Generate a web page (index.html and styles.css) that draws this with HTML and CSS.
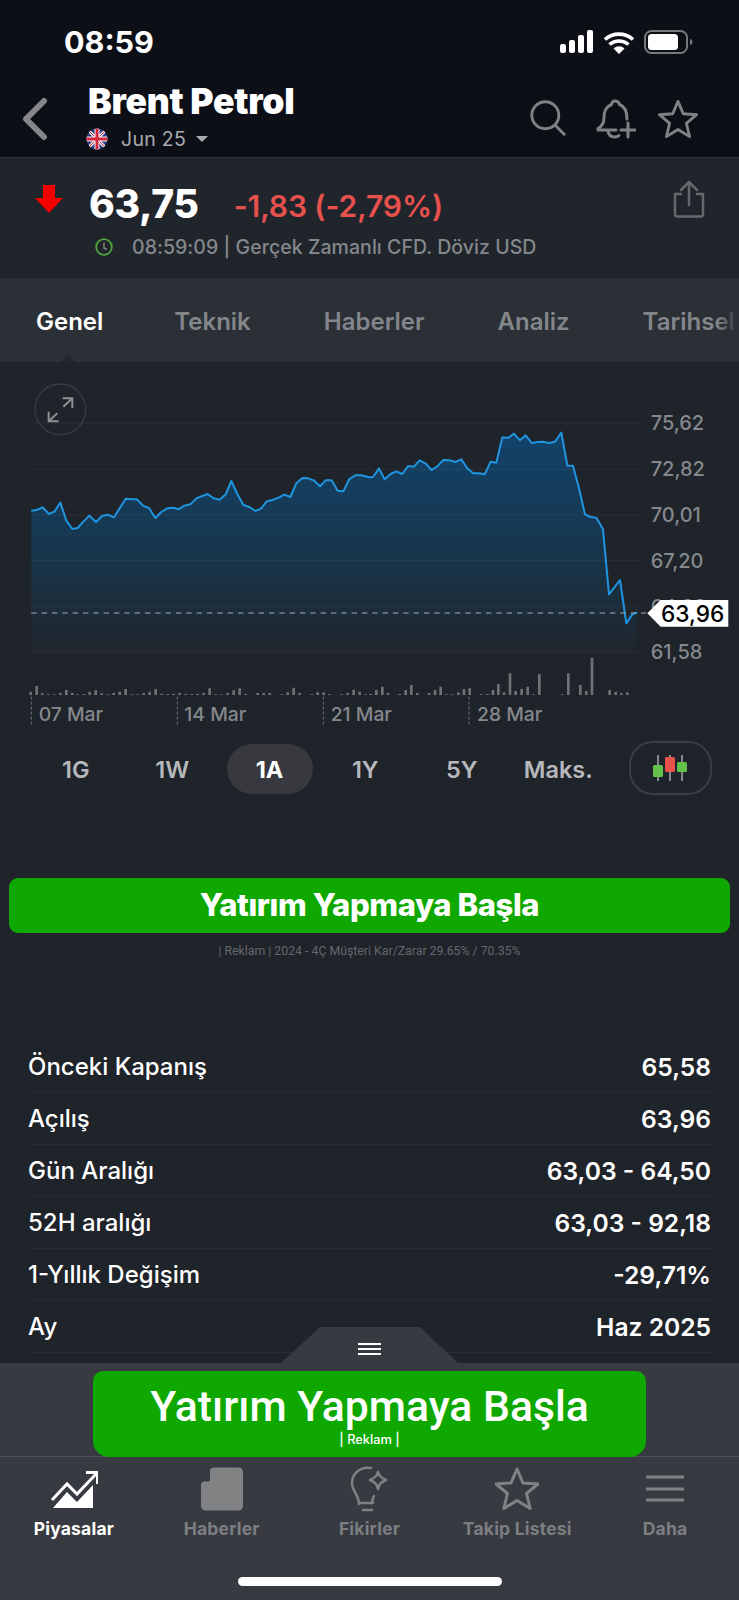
FILE: index.html
```html
<!DOCTYPE html>
<html>
  <head>
    <title>Brent Petrol</title>
    <link rel="stylesheet" href="styles.css">
  </head>
  <body>
    <div class="page">
      <header class="head">
        <div class="status">
          <span class="clock-time">08:59</span>
          <svg class="status-icons" width="134" height="26" viewBox="0 0 134 26">
            <rect x="1" y="15" width="6" height="9" rx="2" fill="#fff"/>
            <rect x="10" y="11" width="6" height="13" rx="2" fill="#fff"/>
            <rect x="19" y="6" width="6" height="18" rx="2" fill="#fff"/>
            <rect x="28" y="1" width="6" height="23" rx="2" fill="#fff"/>
            <path d="M46 10.5a21 21 0 0 1 28 0M50.500 15.500a14.500 14.500 0 0 1 19 0" fill="none" stroke="#fff" stroke-width="3.600"/>
            <path d="M54.500 19.500a8 8 0 0 1 11 0L60 25z" fill="#fff"/>
            <rect x="86" y="2" width="42" height="22" rx="6.500" fill="none" stroke="#77797d" stroke-width="2"/>
            <rect x="89" y="5" width="30" height="16" rx="3.500" fill="#fff"/>
            <path d="M131 10v6c1.500-.5 2.500-1.500 2.500-3s-1-2.500-2.500-3z" fill="#77797d"/>
          </svg>
        </div>
        <div class="topbar">
          <svg class="back" width="26" height="44" viewBox="0 0 26 44">
            <path d="M22 4 4 22l18 18" fill="none" stroke="#85878b" stroke-width="6" stroke-linecap="round" stroke-linejoin="round"/>
          </svg>
          <div class="title-block">
            <div class="title">Brent Petrol</div>
            <div class="subtitle">
              <svg width="22" height="22" viewBox="0 0 22 22">
                <clipPath id="flagclip"><circle cx="11" cy="11" r="10.500"/></clipPath>
                <g clip-path="url(#flagclip)">
                  <rect width="22" height="22" fill="#2e3f85"/>
                  <path d="M0 0l22 22M22 0 0 22" stroke="#f3f3f3" stroke-width="3"/>
                  <path d="M0 0l22 22M22 0 0 22" stroke="#d4273d" stroke-width="1"/>
                  <path d="M11 0v22M0 11h22" stroke="#f3f3f3" stroke-width="5"/>
                  <path d="M11 0v22M0 11h22" stroke="#d4273d" stroke-width="3"/>
                </g>
              </svg>
              <span>Jun 25</span>
              <i class="caret"></i>
            </div>
          </div>
          <div class="top-icons">
            <svg class="icon-search" width="36" height="36" viewBox="0 0 40 40" fill="none" stroke="#808285" stroke-width="3.200" stroke-linecap="round">
              <circle cx="17" cy="17" r="15"/>
              <path d="m28 28 10 10"/>
            </svg>
            <svg class="icon-bell" width="40" height="42" viewBox="0 0 40 42" fill="none" stroke="#808285" stroke-width="3" stroke-linecap="round" stroke-linejoin="round">
              <path d="M19 3c-2 0-3.500 1.500-3.500 3.500C9 9 8 14 8 20c0 5-1.500 8-6 10.500l0 1.500h18M31 21c0-6-1-12-7.500-14.500C23.500 4.500 21 3 19 3"/>
              <path d="M12 33c.5 4 3.500 6 7 6 2 0 3-.5 4-1.500"/>
              <path d="M32 25v14M25 32h14"/>
            </svg>
            <svg width="40" height="40" viewBox="0 0 42 42" fill="none" stroke="#808285" stroke-width="3" stroke-linejoin="round">
              <path d="m21 2.500 5.500 13 14 1-10.700 9 3.400 14L21 32l-12.200 7.500 3.400-14-10.700-9 14-1z"/>
            </svg>
          </div>
        </div>
      </header>

      <section class="quote">
        <div class="quote-main">
          <svg class="down-arrow" width="28" height="28" viewBox="0 0 28 28"><path d="M8 0h12v13h8L14 28 0 13h8z" fill="#f40000"/></svg>
          <span class="price">63,75</span>
          <span class="change">-1,83 (-2,79%)</span>
          <svg class="share" width="32" height="38" viewBox="0 0 32 38" fill="none" stroke="#65686d" stroke-width="2.500" stroke-linecap="round" stroke-linejoin="round">
            <path d="M16 25V2M8 10l8-8 8 8"/>
            <path d="M8 14H2v20c0 1.500 1 2.500 2.500 2.500h23c1.500 0 2.500-1 2.500-2.500V14h-6"/>
          </svg>
        </div>
        <div class="quote-meta">
          <svg width="18" height="18" viewBox="0 0 18 18" fill="none" stroke="#4fa83d" stroke-width="1.800">
            <circle cx="9" cy="9" r="7.800"/>
            <path d="M9 4.500V10l3 1.500" stroke="#85888c" stroke-width="1.400"/>
          </svg>
          <span>08:59:09 | Gerçek Zamanlı CFD. Döviz USD</span>
        </div>
      </section>

      <nav class="tabs">
        <span class="tab tab-on">Genel</span>
        <span class="tab">Teknik</span>
        <span class="tab">Haberler</span>
        <span class="tab">Analiz</span>
        <span class="tab">Tarihsel</span>
      </nav>

      <!-- chart is drawn in 3x units, y=0 is page y 370 -->
      <svg class="chart" width="739" height="363" viewBox="0 -24 2217 1089">
        <defs>
          <linearGradient id="areafill" x1="0" y1="188" x2="0" y2="850" gradientUnits="userSpaceOnUse">
            <stop offset="0" stop-color="#12436a"/>
            <stop offset="0.5" stop-color="#17374f"/>
            <stop offset="1" stop-color="#1f252c"/>
          </linearGradient>
        </defs>
        <polygon fill="url(#areafill)" points="94,845 94,422 110,420 128,412 147,432 163,425 181,398 199,452 217,477 233,474 250,455 268,437 288,456 306,438 323,434 342,442 360,413 377,386 395,388 411,388 429,407 447,414 466,444 484,426 502,415 519,413 536,418 553,407 571,403 589,385 607,378 623,372 641,385 659,389 677,373 694,333 712,372 730,405 748,411 766,423 783,416 800,394 818,390 836,383 853,374 871,381 889,340 907,324 925,325 941,331 960,349 977,331 995,331 1013,362 1030,364 1048,327 1066,316 1084,316 1107,322 1119,321 1137,295 1154,328 1172,312 1189,304 1207,312 1224,288 1242,290 1259,271 1277,281 1295,300 1312,289 1330,270 1348,271 1366,276 1384,268 1402,295 1419,310 1437,310 1454,313 1472,275 1489,278 1507,202 1524,204 1542,191 1560,211 1577,196 1595,219 1613,216 1630,215 1648,219 1665,215 1684,188 1702,287 1719,287 1737,355 1755,433 1772,441 1789,443 1809,478 1827,673 1860,630 1879,760 1897,733 1912,727 1912,845"/>
        <path d="M94 159H1930M94 298H1930M94 435H1930M94 572H1930M94 710H1930M94 845H1930" stroke="#fff" stroke-opacity="0.05" stroke-width="3"/>
        <polyline fill="none" stroke="#1f95e0" stroke-width="6" stroke-linejoin="round" points="94,422 110,420 128,412 147,432 163,425 181,398 199,452 217,477 233,474 250,455 268,437 288,456 306,438 323,434 342,442 360,413 377,386 395,388 411,388 429,407 447,414 466,444 484,426 502,415 519,413 536,418 553,407 571,403 589,385 607,378 623,372 641,385 659,389 677,373 694,333 712,372 730,405 748,411 766,423 783,416 800,394 818,390 836,383 853,374 871,381 889,340 907,324 925,325 941,331 960,349 977,331 995,331 1013,362 1030,364 1048,327 1066,316 1084,316 1107,322 1119,321 1137,295 1154,328 1172,312 1189,304 1207,312 1224,288 1242,290 1259,271 1277,281 1295,300 1312,289 1330,270 1348,271 1366,276 1384,268 1402,295 1419,310 1437,310 1454,313 1472,275 1489,278 1507,202 1524,204 1542,191 1560,211 1577,196 1595,219 1613,216 1630,215 1648,219 1665,215 1684,188 1702,287 1719,287 1737,355 1755,433 1772,441 1789,443 1809,478 1827,673 1860,630 1879,760 1897,733 1912,727"/>
        <path d="M94 729H1940" stroke="#a9acb0" stroke-width="3" stroke-dasharray="16 15"/>

        <path stroke="#6e7175" stroke-width="8" d="M92 975v-10M110 975v-27M127 975v-5M145 975v-2M163 975v-2M181 975v-6M199 975v-15M217 975v-6M233 975v-2M251 975v-3M269 975v-10M287 975v-14M305 975v-5M323 975v-2M341 975v-6M359 975v-10M377 975v-18M395 975v-2M413 975v-2M431 975v-6M449 975v-10M467 975v-18M485 975v-4M503 975v-2M521 975v-3M539 975v-6M557 975v-3M575 975v-2M593 975v-3M611 975v-6M629 975v-20M647 975v-2M665 975v-2M683 975v-6M701 975v-14M719 975v-20M737 975v-3M773 975v-6M791 975v-6M809 975v-6M845 975v-2M863 975v-8M881 975v-22M899 975v-6M935 975v-2M953 975v-8M971 975v-8M989 975v-3M1025 975v-2M1043 975v-6M1061 975v-16M1079 975v-10M1097 975v-2M1112 975v-3M1129 975v-15M1147 975v-25M1164 975v-6M1199 975v-3M1217 975v-15M1234 975v-30M1252 975v-6M1287 975v-6M1305 975v-15M1322 975v-25M1339 975v-2M1357 975v-2M1375 975v-8M1392 975v-18M1409 975v-20M1444 975v-2M1462 975v-3M1479 975v-15M1495 975v-33M1512 975v-8M1530 975v-65M1547 975v-12M1565 975v-18M1583 975v-25M1600 975v-2M1618 975v-62M1687 975v-2M1705 975v-65M1741 975v-30M1759 975v-12M1776 975v-112M1829 975v-15M1847 975v-10M1864 975v-5M1882 975v-8"/>
        <path d="M94 980V1065M532 980V1065M970 980V1065M1407 980V1065" stroke="#6e7175" stroke-width="3" stroke-dasharray="9 6"/>

        <text class="axis" x="1952" y="160">75,62</text>
        <text class="axis" x="1952" y="298">72,82</text>
        <text class="axis" x="1952" y="435">70,01</text>
        <text class="axis" x="1952" y="572">67,20</text>
        <text class="axis" x="1952" y="710">64,39</text>
        <text class="axis" x="1952" y="845">61,58</text>
        <text class="date" x="116" y="1032">07 Mar</text>
        <text class="date" x="553" y="1032">14 Mar</text>
        <text class="date" x="992" y="1032">21 Mar</text>
        <text class="date" x="1431" y="1032">28 Mar</text>

        <polygon points="1942,730 1982,690 2185,690 2185,770 1982,770" fill="#fff"/>
        <text class="tag" x="1983" y="731">63,96</text>

        <circle cx="181" cy="118" r="76" fill="none" stroke="#383c42" stroke-width="4"/>
        <path d="M146 154 172 130M190 110 217 85M146 125v29h30M188 85h29v29" fill="none" stroke="#8e9094" stroke-width="6"/>
      </svg>

      <div class="ranges">
        <span class="range">1G</span>
        <span class="range">1W</span>
        <span class="range range-on">1A</span>
        <span class="range">1Y</span>
        <span class="range">5Y</span>
        <span class="range">Maks.</span>
        <span class="candles">
          <svg width="36" height="26" viewBox="0 0 36 26">
            <path d="M6 0v26M18 0v26M30 0v26" stroke="#85888c" stroke-width="2"/>
            <rect x="1" y="10" width="10" height="12" rx="1.500" fill="#64c24c"/>
            <rect x="13" y="2" width="10" height="15" rx="1.500" fill="#e8524a"/>
            <rect x="25" y="7" width="10" height="10" rx="1.500" fill="#64c24c"/>
          </svg>
        </span>
      </div>

      <div class="cta">Yatırım Yapmaya Başla</div>
      <p class="disclaimer">| Reklam | 2024 - 4Ç Müşteri Kar/Zarar 29.65% / 70.35%</p>

      <div class="stats">
        <div class="stat"><span>Önceki Kapanış</span><b>65,58</b></div>
        <div class="stat"><span>Açılış</span><b>63,96</b></div>
        <div class="stat"><span>Gün Aralığı</span><b>63,03 - 64,50</b></div>
        <div class="stat"><span>52H aralığı</span><b>63,03 - 92,18</b></div>
        <div class="stat"><span>1-Yıllık Değişim</span><b>-29,71%</b></div>
        <div class="stat"><span>Ay</span><b>Haz 2025</b></div>
      </div>

      <footer class="dock">
        <div class="handle"><i></i><i></i><i></i></div>
        <div class="banner">
          <div class="banner-text">Yatırım Yapmaya Başla</div>
          <div class="banner-small">| Reklam |</div>
        </div>
        <div class="nav">
          <div class="nav-item nav-on">
            <svg width="48" height="44" viewBox="0 0 48 44">
              <path d="M2 33 17 17l10 10L46 7" fill="none" stroke="#fff" stroke-width="3"/>
              <path d="M36 5.500h11.500V17" fill="none" stroke="#fff" stroke-width="3"/>
              <path d="M3 41 17 25l10 10 16-17v23z" fill="#fff"/>
            </svg>
            <span>Piyasalar</span>
          </div>
          <div class="nav-item">
            <svg width="44" height="44" viewBox="0 0 44 44">
              <path d="M10 4c0-2 1.500-3.500 3.500-3.500h25c2.500 0 4.500 2 4.500 4.500v34c0 2.500-2 4.500-4.500 4.500h-33C3 43.500 1 41.500 1 39V18c0-2 1.500-3.500 3.500-3.500H8c1.500 0 2-1 2-2z" fill="#808284"/>
            </svg>
            <span>Haberler</span>
          </div>
          <div class="nav-item">
            <svg width="44" height="46" viewBox="0 0 44 46" fill="none" stroke="#808284" stroke-width="2.500" stroke-linecap="round" stroke-linejoin="round">
              <path d="M24 2C13 0 5 8 5 17c0 8 7 12 7 21"/>
              <path d="M27 30c-1 2-2 4-2 7"/>
              <path d="M31 6c1 4 3 6 8 8-5 2-7 4-8 9-1-5-3-7-8-9 5-2 7-4 8-8z"/>
              <path d="M13 37h13M16 44h9"/>
            </svg>
            <span>Fikirler</span>
          </div>
          <div class="nav-item">
            <svg width="44" height="44" viewBox="0 0 44 44" fill="none" stroke="#808284" stroke-width="3" stroke-linejoin="round">
              <path d="m22 2 6 14 15 1-11.500 9.500 3.700 15L22 33.500 8.800 41.500l3.700-15L1 17l15-1z"/>
            </svg>
            <span>Takip Listesi</span>
          </div>
          <div class="nav-item">
            <svg width="44" height="44" viewBox="0 0 44 44" stroke="#808284" stroke-width="3">
              <path d="M3 10h38M3 22h38M3 33h38"/>
            </svg>
            <span>Daha</span>
          </div>
        </div>
        <div class="home-bar"></div>
      </footer>
    </div>
  </body>
</html>
```

FILE: styles.css
```css
* { box-sizing: border-box; }
html, body { margin: 0; padding: 0; background: #1f232a; }
body { font-family: Inter, "Noto Sans", sans-serif; color: #fff; }

.page { width: 739px; height: 1600px; display: flex; flex-direction: column; overflow: hidden; position: relative; }

.head { height: 158px; background: #0c0f16; border-bottom: 1px solid #2c3036; flex: none; }
.status { height: 82px; display: flex; justify-content: space-between; align-items: center; padding: 0 46px 0 64px; }
.clock-time { font-size: 30.500px; font-weight: 700; }
.status-icons { margin-top: 2px; }
.topbar { display: flex; align-items: flex-start; padding: 0 41px 0 22px; }
.back { margin-top: 15px; }
.title-block { margin-left: 40px; margin-top: 0; }
.title { font-size: 35.500px; font-weight: 900; line-height: 40px; letter-spacing: -0.25px; }
.subtitle { display: flex; align-items: center; font-size: 19.500px; color: #a9abae; line-height: 30px; margin-top: 2px; margin-left: -2px; }
.subtitle span { margin-left: 13px; letter-spacing: 0.3px; }
.caret { width: 0; height: 0; border: 6px solid transparent; border-top: 6px solid #a9abae; border-bottom: 0; margin-left: 10px; }
.top-icons { margin-left: auto; display: flex; align-items: center; margin-top: 16px; }
.icon-search { margin-right: 30px; margin-top: -3px; }
.icon-bell { margin-right: 22px; }

.quote { height: 120px; background: #20242b; flex: none; padding-top: 20px; }
.quote-main { display: flex; align-items: center; height: 50px; padding: 0 34px 0 35px; }
.down-arrow { margin-top: -8px; }
.price { font-size: 39px; font-weight: 800; margin-left: 26px; letter-spacing: -0.3px; }
.change { font-size: 30px; font-weight: 600; color: #e6504d; margin-left: 35px; margin-top: 6px; letter-spacing: -0.1px; }
.share { margin-left: auto; margin-top: -8px; }
.quote-meta { display: flex; align-items: center; margin-top: 7px; padding-left: 95px; font-size: 19.500px; font-weight: 500; color: #85888c; letter-spacing: 0.05px; }
.quote-meta span { margin-left: 19px; }

.tabs { height: 84px; background: #2b2f36; flex: none; display: flex; align-items: center; gap: 73px; padding: 2px 0 0 36px; position: relative; white-space: nowrap; overflow: hidden; }
.tabs::before { content: ""; position: absolute; left: 60px; bottom: 0; border: 8px solid transparent; border-bottom: 7px solid #23272e; border-top: 0; }
.tabs::after { content: ""; position: absolute; right: 0; top: 0; bottom: 0; width: 22px; background: linear-gradient(to right, rgba(43,47,54,0), #2b2f36); }
.tab { font-size: 24px; font-weight: 600; color: #83868a; flex: none; }
.tab:nth-child(2) { margin-left: -2px; }
.tab-on { color: #fff; }

.chart { display: block; flex: none; }
.axis { font-size: 60px; font-weight: 500; fill: #85888c; dominant-baseline: central; }
.date { font-size: 58px; font-weight: 500; fill: #85888c; dominant-baseline: central; }
.tag { font-size: 68px; font-weight: 500; fill: #000; dominant-baseline: central; }

.ranges { height: 153px; flex: none; padding: 16px 0 0 27.500px; display: flex; align-items: flex-start; }
.range { width: 96.500px; height: 50px; margin-top: 3px; display: flex; align-items: center; justify-content: center; font-size: 23.500px; font-weight: 600; color: #b6b8bc; }
.range-on { width: 86px; margin-left: 6px; margin-right: 4.500px; background: #37393f; border-radius: 25px; color: #fff; font-weight: 700; }
.candles { width: 83px; height: 54px; margin-left: 22px; border: 2px solid #3a3d43; border-radius: 24px; display: flex; align-items: center; justify-content: center; flex: none; }

.cta { height: 55px; margin: 0 9px; padding-bottom: 2px; flex: none; background: #0ea800; border-radius: 9px; display: flex; align-items: center; justify-content: center; font-size: 31px; font-weight: 800; letter-spacing: -0.4px; }
.disclaimer { margin: 9px 0 0; height: 18px; line-height: 18px; flex: none; text-align: center; font-family: Roboto, sans-serif; font-size: 12.300px; color: #64676c; }

.stats { margin-top: 81px; padding: 0 28px; flex: none; }
.stat { height: 52px; display: flex; justify-content: space-between; align-items: center; font-size: 24px; font-weight: 500; border-bottom: 1px solid #292d34; }
.stat b { font-weight: 600; font-size: 24.600px; }

.dock { position: absolute; left: 0; right: 0; bottom: 0; height: 237px; background: #373a40; }
.handle { position: absolute; left: 281px; top: -36px; width: 177px; height: 36px; background: #373a40; clip-path: polygon(39px 0, 139px 0, 177px 100%, 0 100%); display: flex; flex-direction: column; align-items: center; padding-top: 16px; gap: 3px; }
.handle i { width: 23px; height: 2px; background: #fff; flex: none; }
.banner { position: absolute; left: 93px; top: 8px; width: 553px; height: 86px; background: #0ea800; border-radius: 10px 10px 16px 16px; text-align: center; z-index: 1; }
.banner-text { font-family: Roboto, sans-serif; font-size: 42.700px; font-weight: 500; line-height: 52px; margin-top: 9px; }
.banner-small { font-size: 12.800px; font-weight: 500; line-height: 14px; margin-top: 1px; }
.nav { position: absolute; left: 0; right: 0; top: 93px; border-top: 1px solid #4c4f55; display: grid; grid-template-columns: repeat(5, 147.800px); }
.nav-item { display: flex; flex-direction: column; align-items: center; height: 92px; padding-top: 9px; color: #7c7e82; font-size: 17.500px; font-weight: 700; letter-spacing: 0.2px; white-space: nowrap; }
.nav-item svg { height: 46px; flex: none; }
.nav-item span { margin-top: 6px; }
.nav-on { color: #fff; }
.home-bar { position: absolute; left: 238px; top: 214px; width: 264px; height: 9px; background: #fff; border-radius: 5px; }
```
